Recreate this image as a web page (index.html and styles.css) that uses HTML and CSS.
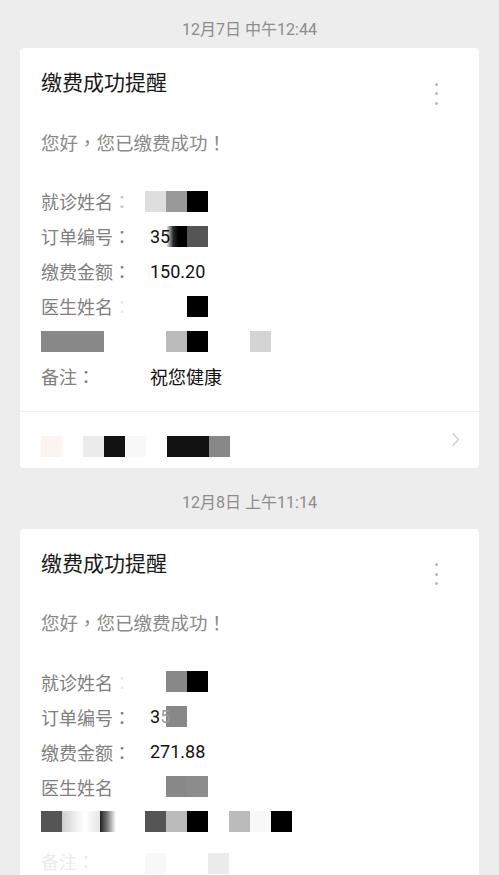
FILE: index.html
```html
<!DOCTYPE html>
<html lang="zh-CN">
<head>
<meta charset="utf-8">
<title>缴费成功提醒</title>
<link rel="stylesheet" href="styles.css">
</head>
<body>
<div class="page">
  <div class="ts ts-first">12月7日 中午12:44</div>
  <div class="card">
    <div class="head">
      <div class="title">缴费成功提醒</div>
      <div class="dots"><i></i><i></i><i></i></div>
    </div>
    <div class="greet">您好<span class="p">，</span>您已缴费成功<span class="p">！</span></div>
    <div class="rows">
      <div class="row"><span class="label">就诊姓名<span class="p colon-faint">：</span></span><span class="value"><i class="b gd"></i><i class="b g9"></i><i class="b k0"></i></span></div>
      <div class="row"><span class="label">订单编号<span class="p">：</span></span><span class="value stack"><span class="blocks"><i class="b e"></i><i class="b smudge"></i><i class="b g5"></i></span><span class="txt">35</span></span></div>
      <div class="row"><span class="label">缴费金额<span class="p">：</span></span><span class="value"><span class="txt">150.20</span></span></div>
      <div class="row"><span class="label">医生姓名<span class="p colon-ghost">：</span></span><span class="value"><i class="b e"></i><i class="b e"></i><i class="b k0"></i></span></div>
      <div class="row"><span class="label"><i class="b wide g8"></i></span><span class="value"><i class="b e"></i><i class="b gb"></i><i class="b k0"></i><i class="b e"></i><i class="b e"></i><i class="b gc"></i></span></div>
      <div class="row"><span class="label">备注<span class="p">：</span></span><span class="value"><span class="txt">祝您健康</span></span></div>
    </div>
    <div class="foot">
      <span class="blocks"><i class="b pk"></i><i class="b e"></i><i class="b ge"></i><i class="b k1"></i><i class="b gf"></i><i class="b e"></i><i class="b k1"></i><i class="b k1"></i><i class="b g8"></i></span>
      <svg class="chev" width="9" height="15" viewBox="0 0 9 15"><polyline points="1.5,1 7.5,7.5 1.5,14" fill="none" stroke="#d0d0d0" stroke-width="1.4"/></svg>
    </div>
  </div>

  <div class="ts">12月8日 上午11:14</div>
  <div class="card">
    <div class="head">
      <div class="title">缴费成功提醒</div>
      <div class="dots"><i></i><i></i><i></i></div>
    </div>
    <div class="greet">您好<span class="p">，</span>您已缴费成功<span class="p">！</span></div>
    <div class="rows">
      <div class="row"><span class="label">就诊姓名<span class="p colon-ghost">：</span></span><span class="value"><i class="b e"></i><i class="b g8"></i><i class="b k0"></i></span></div>
      <div class="row"><span class="label">订单编号<span class="p">：</span></span><span class="value stack"><span class="blocks"><i class="b e"></i><i class="b g8"></i></span><span class="txt">3<span class="faint">5</span></span></span></div>
      <div class="row"><span class="label">缴费金额<span class="p">：</span></span><span class="value"><span class="txt">271.88</span></span></div>
      <div class="row"><span class="label">医生姓名</span><span class="value"><i class="b e"></i><i class="b g8"></i><i class="b g8b"></i></span></div>
      <div class="row"><span class="label"><i class="b g5"></i><i class="b glow"></i><i class="b gdark"></i></span><span class="value"><i class="b g5"></i><i class="b gb"></i><i class="b k0"></i><i class="b e"></i><i class="b gb"></i><i class="b gf"></i><i class="b k0"></i></span></div>
      <div class="row row-low"><span class="label ghost">备注<span class="p">：</span></span><span class="value"><i class="b gf"></i><i class="b e"></i><i class="b e"></i><i class="b ge"></i></span></div>
    </div>
  </div>
</div>
</body>
</html>
```
FILE: styles.css
```css
* { box-sizing: border-box; }
html, body {
  margin: 0;
  padding: 0;
  background: #ededed;
}
body {
  width: 499px;
  height: 875px;
  overflow: hidden;
  font-family: "Roboto", "Noto Sans CJK SC", sans-serif;
  text-spacing-trim: space-all;
}
.page {
  display: flex;
  flex-direction: column;
}
.p {
  font-family: "Noto Sans CJK TC", "Noto Sans CJK SC", sans-serif;
  display: inline-block;
  width: 1em;
  text-align: center;
}
.ts {
  text-align: center;
  font-size: 16px;
  line-height: 20px;
  color: #8c8c8c;
  margin: 25px 0 16px;
}
.ts-first {
  margin: 20px 0 8px;
}
.card {
  margin: 0 20px;
  background: #ffffff;
  border-radius: 4px;
}
.head {
  display: flex;
  justify-content: space-between;
  align-items: flex-start;
  padding: 20px 41px 0 21px;
}
.title {
  font-size: 21px;
  line-height: 30px;
  color: #1a1a1a;
}
.dots {
  display: flex;
  flex-direction: column;
  gap: 6.5px;
  margin-top: 14.5px;
}
.dots i {
  display: block;
  width: 3px;
  height: 3px;
  border-radius: 50%;
  background: #b8b8b8;
}
.greet {
  padding-left: 21px;
  margin-top: 22px;
  font-size: 18.5px;
  line-height: 30px;
  color: #8a8a8a;
}
.rows {
  margin-top: 25px;
  padding: 0 21px 17px;
}
.row {
  display: flex;
  align-items: center;
  height: 35px;
}
.row-low {
  align-items: flex-end;
}
.label {
  width: 104px;
  flex: none;
  display: flex;
  align-items: center;
  font-size: 18px;
  color: #808080;
  white-space: nowrap;
}
.label.ghost { color: #ececec; }
.colon-faint { color: #c4c4c4; }
.colon-ghost { color: #ececec; }
.value {
  display: flex;
  align-items: center;
  font-size: 18px;
  color: #111111;
}
.value.stack {
  display: grid;
  align-items: center;
}
.value.stack > * {
  grid-area: 1 / 1;
}
.value.stack .txt { position: relative; }
.blocks { display: flex; }
.txt {
  padding-left: 5px;
  white-space: nowrap;
}
.faint { color: #9a9a9a; }
.b {
  display: block;
  width: 21px;
  height: 21px;
  flex: none;
}
.b.wide { width: 63px; }
.e { background: transparent; }
.k0 { background: #000000; }
.k1 { background: #121212; }
.g5 { background: #555555; }
.g8 { background: #888888; }
.g8b { background: #8c8c8c; }
.g9 { background: #999999; }
.gb { background: #bbbbbb; }
.gc { background: #d4d4d4; }
.gd { background: #dedede; }
.ge { background: #ebebeb; }
.gf { background: #f8f8f8; }
.pk { background: #fdf4f1; }
.smudge { background: linear-gradient(to right, rgba(0,0,0,0) 0, rgba(0,0,0,0.85) 35%, #000 60%); }
.glow { width: 38px; background: linear-gradient(to right, #cfcfcf 0, #f2f2f2 40%, #ffffff 60%, #e6e6e6 100%); }
.gdark { width: 16px; background: linear-gradient(to right, #222222 0, #777777 45%, #ffffff 100%); }
.foot {
  display: flex;
  align-items: flex-start;
  height: 57px;
  border-top: 1px solid #f0f0f0;
  padding: 24px 19px 0 21px;
}
.chev {
  margin-left: auto;
  margin-top: -4px;
}
```
